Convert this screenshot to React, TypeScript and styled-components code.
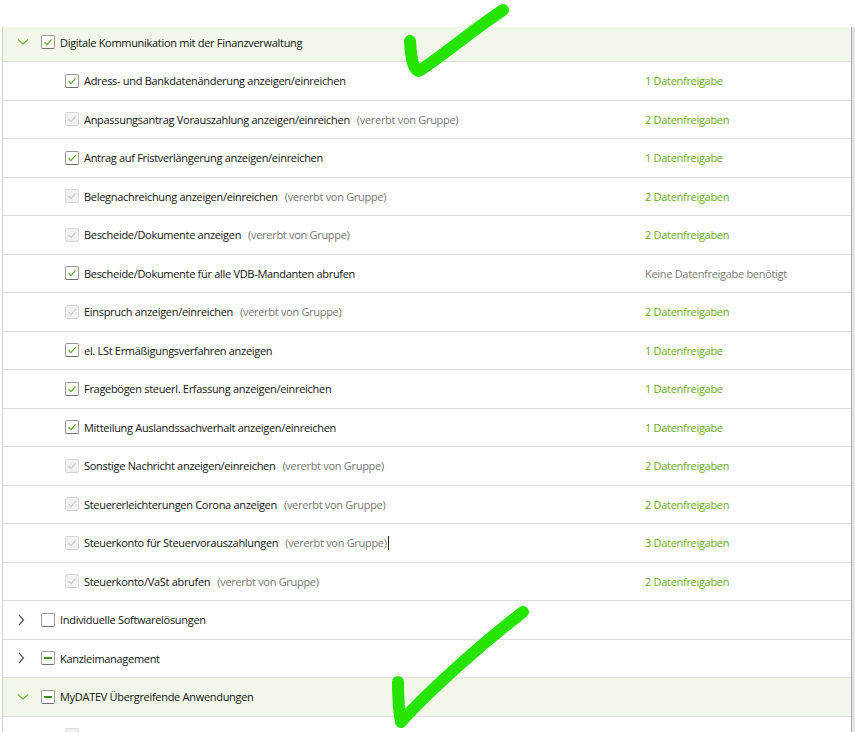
import styled, { createGlobalStyle } from 'styled-components';

type Check = 'checked' | 'inherited' | 'empty' | 'partial';

type Item = {
  label: string;
  state: Check;
  status?: string;
  caret?: boolean;
};

const items: Item[] = [
  { label: 'Adress- und Bankdatenänderung anzeigen/einreichen', state: 'checked', status: '1 Datenfreigabe' },
  { label: 'Anpassungsantrag Vorauszahlung anzeigen/einreichen', state: 'inherited', status: '2 Datenfreigaben' },
  { label: 'Antrag auf Fristverlängerung anzeigen/einreichen', state: 'checked', status: '1 Datenfreigabe' },
  { label: 'Belegnachreichung anzeigen/einreichen', state: 'inherited', status: '2 Datenfreigaben' },
  { label: 'Bescheide/Dokumente anzeigen', state: 'inherited', status: '2 Datenfreigaben' },
  { label: 'Bescheide/Dokumente für alle VDB-Mandanten abrufen', state: 'checked', status: 'Keine Datenfreigabe benötigt' },
  { label: 'Einspruch anzeigen/einreichen', state: 'inherited', status: '2 Datenfreigaben' },
  { label: 'el. LSt Ermäßigungsverfahren anzeigen', state: 'checked', status: '1 Datenfreigabe' },
  { label: 'Fragebögen steuerl. Erfassung anzeigen/einreichen', state: 'checked', status: '1 Datenfreigabe' },
  { label: 'Mitteilung Auslandssachverhalt anzeigen/einreichen', state: 'checked', status: '1 Datenfreigabe' },
  { label: 'Sonstige Nachricht anzeigen/einreichen', state: 'inherited', status: '2 Datenfreigaben' },
  { label: 'Steuererleichterungen Corona anzeigen', state: 'inherited', status: '2 Datenfreigaben' },
  { label: 'Steuerkonto für Steuervorauszahlungen', state: 'inherited', status: '3 Datenfreigaben', caret: true },
  { label: 'Steuerkonto/VaSt abrufen', state: 'inherited', status: '2 Datenfreigaben' },
];

const GlobalStyle = createGlobalStyle`
  html, body {
    margin: 0;
    padding: 0;
    background: #ffffff;
    overflow: hidden;
  }
  body {
    font-family: 'Open Sans', 'Noto Sans', sans-serif;
    font-size: 11px;
    letter-spacing: -0.3px;
    color: #141414;
  }
`;

const CheckBox = ({ state }: { state: Check }) => (
  <Box $state={state}>
    {(state === 'checked' || state === 'inherited') && (
      <svg width="10" height="10" viewBox="0 0 10 10">
        <path
          d="M1.5 5.2 L4 7.6 L8.6 2.4"
          fill="none"
          stroke={state === 'checked' ? '#5aa829' : '#c9c9c9'}
          strokeWidth="1.2"
        />
      </svg>
    )}
    {state === 'partial' && <Dash />}
  </Box>
);

const Chevron = ({ open }: { open: boolean }) =>
  open ? (
    <svg width="12" height="8" viewBox="0 0 12 8">
      <path d="M1 1.5 L6 6 L11 1.5" fill="none" stroke="#6cb33a" strokeWidth="1.1" />
    </svg>
  ) : (
    <svg width="8" height="12" viewBox="0 0 8 12">
      <path d="M2 1 L6.5 6 L2 11" fill="none" stroke="#555555" strokeWidth="1.2" />
    </svg>
  );

const Group = ({ label, state, open }: { label: string; state: Check; open: boolean }) => (
  <GroupRow $open={open}>
    <ChevronSlot>
      <Chevron open={open} />
    </ChevronSlot>
    <CheckBox state={state} />
    <Label>{label}</Label>
  </GroupRow>
);

export default function App() {
  return (
    <>
      <GlobalStyle />
      <Page>
        <Panel>
          <Group label="Digitale Kommunikation mit der Finanzverwaltung" state="checked" open />
          {items.map((item) => (
            <ItemRow key={item.label}>
              <MainCell>
                <CheckBox state={item.state} />
                <Label>{item.label}</Label>
                {item.state === 'inherited' && (
                  <Inherited>
                    (vererbt von Gruppe)
                    {item.caret && <Caret />}
                  </Inherited>
                )}
              </MainCell>
              <Status $muted={item.status === 'Keine Datenfreigabe benötigt'}>{item.status}</Status>
            </ItemRow>
          ))}
          <Group label="Individuelle Softwarelösungen" state="empty" open={false} />
          <Group label="Kanzleimanagement" state="partial" open={false} />
          <Group label="MyDATEV Übergreifende Anwendungen" state="partial" open />
          <ItemRow>
            <MainCell>
              <CheckBox state="inherited" />
            </MainCell>
          </ItemRow>
        </Panel>
        <Scrollbar />
        <Marker viewBox="0 0 855 732" width="855" height="732">
          <path d="M410 41 C411 58 413 70 419 71 C440 58 470 32 503 10" />
          <path d="M398 682 C398 700 399 712 401 722 C430 690 480 645 523 612" />
        </Marker>
      </Page>
    </>
  );
}

const Page = styled.div`
  position: relative;
  display: flex;
  height: 732px;
  padding-top: 27px;
  padding-left: 2px;
  box-sizing: border-box;
  overflow: hidden;
`;

const Panel = styled.div`
  width: 848px;
  border-left: 1px solid #cfcfcf;
  border-right: 1px solid #a9a9a9;
  display: flex;
  flex-direction: column;
`;

const Scrollbar = styled.div`
  width: 3px;
  background: #e4e4e4;
`;

const GroupRow = styled.div<{ $open: boolean }>`
  display: flex;
  align-items: center;
  flex: 0 0 38.5px;
  box-sizing: border-box;
  padding-left: 12px;
  background: ${(p) => (p.$open ? '#f2f7e9' : '#ffffff')};
  border-bottom: 1px solid #dfdfdf;

  &:first-child {
    flex-basis: 35px;
    padding-bottom: 4px;
  }
`;

const ChevronSlot = styled.div`
  width: 26px;
  display: flex;
  align-items: center;
  padding-left: 2px;
  box-sizing: border-box;
`;

const ItemRow = styled.div`
  display: flex;
  align-items: center;
  flex: 0 0 38.5px;
  box-sizing: border-box;
  padding-left: 62px;
  border-bottom: 1px solid #dfdfdf;
`;

const MainCell = styled.div`
  flex: 0 0 580px;
  display: flex;
  align-items: center;
`;

const Box = styled.span<{ $state: Check }>`
  width: 14px;
  height: 14px;
  box-sizing: border-box;
  flex-shrink: 0;
  border-radius: 2px;
  display: inline-flex;
  align-items: center;
  justify-content: center;
  border: 1px solid ${(p) => (p.$state === 'inherited' ? '#dcdcdc' : '#9a9a9a')};
  border-bottom-color: ${(p) => (p.$state === 'inherited' ? '#d2d2d2' : '#6f6f6f')};
  background: ${(p) => (p.$state === 'inherited' ? '#f1f1f1' : '#ffffff')};
`;

const Dash = styled.span`
  width: 8px;
  height: 2px;
  background: #3f8a1d;
`;

const Label = styled.span`
  margin-left: 5px;
  white-space: nowrap;
  color: #141414;
`;

const Inherited = styled.span`
  margin-left: 7px;
  white-space: nowrap;
  color: #767676;
  display: inline-flex;
  align-items: center;
`;

const Caret = styled.span`
  width: 1px;
  height: 14px;
  margin-left: 1px;
  background: #222222;
`;

const Status = styled.span<{ $muted: boolean }>`
  white-space: nowrap;
  color: ${(p) => (p.$muted ? '#7a7a7a' : '#6aab23')};
`;

const Marker = styled.svg`
  position: absolute;
  left: 0;
  top: 0;
  pointer-events: none;

  path {
    fill: none;
    stroke: #27e300;
    stroke-width: 12;
    stroke-linecap: round;
    stroke-linejoin: round;
  }
`;
